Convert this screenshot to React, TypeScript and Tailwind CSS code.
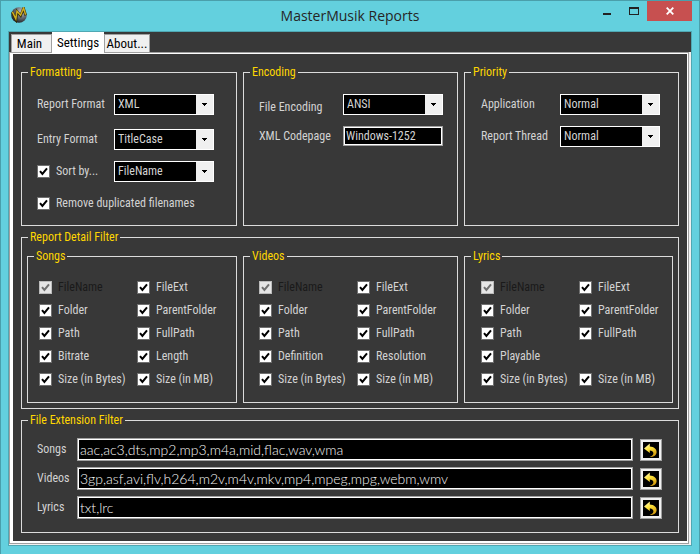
import { ReactNode, useState } from "react";

type Option = { label: string; disabled?: boolean } | null;

const songs: Option[] = [
	{ label: "FileName", disabled: true },
	{ label: "FileExt" },
	{ label: "Folder" },
	{ label: "ParentFolder" },
	{ label: "Path" },
	{ label: "FullPath" },
	{ label: "Bitrate" },
	{ label: "Length" },
	{ label: "Size (in Bytes)" },
	{ label: "Size (in MB)" },
];

const videos: Option[] = [
	{ label: "FileName", disabled: true },
	{ label: "FileExt" },
	{ label: "Folder" },
	{ label: "ParentFolder" },
	{ label: "Path" },
	{ label: "FullPath" },
	{ label: "Definition" },
	{ label: "Resolution" },
	{ label: "Size (in Bytes)" },
	{ label: "Size (in MB)" },
];

const lyrics: Option[] = [
	{ label: "FileName", disabled: true },
	{ label: "FileExt" },
	{ label: "Folder" },
	{ label: "ParentFolder" },
	{ label: "Path" },
	{ label: "FullPath" },
	{ label: "Playable" },
	null,
	{ label: "Size (in Bytes)" },
	{ label: "Size (in MB)" },
];

const extensions = [
	{ id: "ext-songs", label: "Songs", value: "aac,ac3,dts,mp2,mp3,m4a,mid,flac,wav,wma" },
	{ id: "ext-videos", label: "Videos", value: "3gp,asf,avi,flv,h264,m2v,m4v,mkv,mp4,mpeg,mpg,webm,wmv" },
	{ id: "ext-lyrics", label: "Lyrics", value: "txt,lrc" },
];

const Group = ({ title, className, children }: { title: string; className: string; children: ReactNode }) => (
	<fieldset className={`min-w-0 border border-[#dcdcdc] ${className}`}>
		<legend className="px-0.5 leading-[15px] text-[#ffd700]">{title}</legend>
		{children}
	</fieldset>
);

const Select = ({ id, value }: { id: string; value: string }) => (
	<div className="relative w-[100px] shrink-0 border border-white bg-black">
		<select id={id} className="block h-[19px] w-full appearance-none bg-black pr-5 pl-[3px] text-[#d3d3d3] outline-none">
			<option>{value}</option>
		</select>
		<span className="pointer-events-none absolute inset-y-0 right-0 flex w-[17px] items-center justify-center bg-[#f0f0f0]">
			<svg width="5" height="3" viewBox="0 0 5 3" shapeRendering="crispEdges">
				<path d="M0 0h5v1H4v1H3v1H2V2H1V1H0z" fill="#000" />
			</svg>
		</span>
	</div>
);

const Check = ({ label, disabled = false }: { label: string; disabled?: boolean }) => (
	<label className={`flex h-[13px] items-center gap-1.5 whitespace-nowrap ${disabled ? "text-[#1a1a1a]" : ""}`}>
		<span className="relative size-[13px] shrink-0">
			<input
				type="checkbox"
				defaultChecked
				disabled={disabled}
				className="peer block size-[13px] appearance-none border border-[#707070] bg-white disabled:border-[#bcbcbc] disabled:bg-[#e6e6e6]"
			/>
			<svg
				viewBox="0 0 13 13"
				className="pointer-events-none invisible absolute inset-0 text-black peer-checked:visible peer-disabled:text-[#707070]">
				<path d="M3 6.2 5.4 9 10 3.4" fill="none" stroke="currentColor" strokeWidth="2" />
			</svg>
		</span>
		{label}
	</label>
);

const CheckGrid = ({ options }: { options: Option[] }) => (
	<div className="grid grid-cols-[98px_1fr] gap-y-2.5">
		{options.map((option, i) => (option ? <Check key={i} {...option} /> : <span key={i} />))}
	</div>
);

const Logo = () => (
	<svg width="16" height="16" viewBox="0 0 16 16">
		<defs>
			<radialGradient id="ball" cx="0.65" cy="0.3" r="0.75">
				<stop offset="0" stopColor="#c4c8ce" />
				<stop offset="0.5" stopColor="#6a6f76" />
				<stop offset="1" stopColor="#1b1d20" />
			</radialGradient>
		</defs>
		<circle cx="8" cy="8" r="7.8" fill="url(#ball)" />
		<path d="M1.2 5.2 5 12.4 6 4.6 9.6 8.6 12.6 1.4 14.6 8.4" fill="none" stroke="#2e2806" strokeWidth="2.6" />
		<path d="M1.4 4.8 4.8 11.8 6 4.2 9.6 8.2 12.6 1 14.6 7.8" fill="none" stroke="#cfae20" strokeWidth="1.5" />
	</svg>
);

const UndoIcon = () => (
	<svg width="16" height="16" viewBox="0 0 16 16" className="bg-black">
		<defs>
			<linearGradient id="gold" x1="0" y1="0" x2="0.6" y2="1">
				<stop offset="0" stopColor="#fffbe0" />
				<stop offset="0.45" stopColor="#ffe640" />
				<stop offset="1" stopColor="#d8a010" />
			</linearGradient>
		</defs>
		<path d="M1 6.6 6.8 1.4V4.6C11 4.8 13.6 7 13.6 10C13.6 13 11 15 6.6 15C9.2 14.2 10.6 12.8 10.4 11C10.2 9.4 8.8 8.4 6.8 8.4V11Z" fill="url(#gold)" />
	</svg>
);

const ExtensionRow = ({ id, label, value }: { id: string; label: string; value: string }) => {
	const [text, setText] = useState(value);

	return (
		<div className="flex items-center">
			<label htmlFor={id} className="w-10 shrink-0">
				{label}
			</label>
			<input
				id={id}
				value={text}
				onChange={(e) => setText(e.target.value)}
				className="h-[23px] min-w-0 flex-1 border border-[#a0a0a0] bg-black px-0.5 font-['Lato','Liberation_Sans',sans-serif] text-[14px] font-light text-[#f5f5f5] shadow-[inset_0_0_0_1px_#fff] outline-none"
			/>
			<button
				type="button"
				aria-label={`Reset ${label}`}
				onClick={() => setText(value)}
				className="ml-[7px] flex size-[22px] shrink-0 items-center justify-center border border-[#a0a0a0] bg-[#f0f0f0]">
				<UndoIcon />
			</button>
		</div>
	);
};

const TitleBar = () => (
	<header className="grid h-[30px] grid-cols-[1fr_auto_1fr]">
		<div className="pt-1.5 pl-2.5">
			<Logo />
		</div>
		<h1 className="font-['Open_Sans',sans-serif] text-[14px] leading-[30px] text-[#262626]">MasterMusik Reports</h1>
		<div className="flex h-5 justify-end pr-[7px]">
			<button type="button" aria-label="Minimize" className="flex w-7 items-center justify-center">
				<svg width="8" height="8" viewBox="0 0 8 8">
					<path d="M0 6h8v2H0z" fill="#222" />
				</svg>
			</button>
			<button type="button" aria-label="Maximize" className="flex w-[26px] items-center justify-center">
				<svg width="10" height="8" viewBox="0 0 10 8" shapeRendering="crispEdges">
					<path d="M0 0h10v8H0zM1 2v5h8V2z" fill="#222" fillRule="evenodd" />
				</svg>
			</button>
			<button type="button" aria-label="Close" className="flex w-[45px] items-center justify-center bg-[#c75050]">
				<svg width="8" height="8" viewBox="0 0 8 8">
					<path d="M.7.7 7.3 7.3M7.3.7.7 7.3" stroke="#fff" strokeWidth="1.8" />
				</svg>
			</button>
		</div>
	</header>
);

const App = () => {
	return (
		<div className="flex min-h-screen flex-col border border-[#4a9fab] bg-[#63d0de] font-['Roboto_Condensed','Liberation_Sans',sans-serif] text-[12px] leading-[15px] text-[#d3d3d3]">
			<TitleBar />
			<main className="mx-[7px] mb-2 flex flex-1 flex-col border border-[#4fa8b3] bg-[#383838]">
				<nav className="flex h-5 items-end pl-0.5 text-[13px] text-black">
					<button type="button" className="h-[18px] w-[41px] border border-b-0 border-[#a0a0a0] bg-[#f0f0f0] pr-1">
						Main
					</button>
					<button type="button" className="relative -mb-px h-[21px] w-[52px] bg-white">
						Settings
					</button>
					<button type="button" className="h-[18px] w-[46px] border border-b-0 border-[#a0a0a0] bg-[#f0f0f0]">
						About...
					</button>
				</nav>

				<div className="flex flex-1 flex-col bg-[#f0f0f0] pr-0.5 pb-px">
					<div className="flex flex-1 flex-col border border-[#a0a0a0] bg-white pt-px pr-px pb-0.5 pl-[3px]">
						<form className="flex flex-1 flex-col gap-1 bg-[#383838] px-2 pt-[11px] pb-2">
							<div className="grid grid-cols-[216fr_215fr_215fr] gap-x-1.5">
								<Group title="Formatting" className="px-[15px] pt-3.5 pb-[15px] [&>legend]:-ml-[9px]">
									<div className="flex items-center">
										<label htmlFor="report-format" className="w-[77px]">Report Format</label>
										<Select id="report-format" value="XML" />
									</div>
									<div className="mt-3.5 flex items-center">
										<label htmlFor="entry-format" className="w-[77px]">Entry Format</label>
										<Select id="entry-format" value="TitleCase" />
									</div>
									<div className="mt-[11px] flex items-center">
										<div className="w-[77px]">
											<Check label="Sort by..." />
										</div>
										<Select id="sort-by" value="FileName" />
									</div>
									<div className="mt-[15px]">
										<Check label="Remove duplicated filenames" />
									</div>
								</Group>

								<Group title="Encoding" className="px-[15px] pt-3.5 pr-3.5 [&>legend]:-ml-[9px]">
									<div className="flex items-end">
										<label htmlFor="file-encoding" className="w-[84px]">File Encoding</label>
										<Select id="file-encoding" value="ANSI" />
									</div>
									<div className="mt-[11px] flex items-center">
										<label htmlFor="codepage" className="w-[84px]">XML Codepage</label>
										<input
											id="codepage"
											defaultValue="Windows-1252"
											className="h-5 w-[100px] border border-[#a0a0a0] bg-black px-0.5 shadow-[inset_0_0_0_1px_#fff] outline-none"
										/>
									</div>
								</Group>

								<Group title="Priority" className="pt-3.5 pl-4 [&>legend]:-ml-2.5">
									<div className="flex items-center">
										<label htmlFor="app-priority" className="w-[79px]">Application</label>
										<Select id="app-priority" value="Normal" />
									</div>
									<div className="mt-[11px] flex items-center">
										<label htmlFor="thread-priority" className="w-[79px]">Report Thread</label>
										<Select id="thread-priority" value="Normal" />
									</div>
								</Group>
							</div>

							<Group title="Report Detail Filter" className="px-[5px] pt-1 pb-[5px] [&>legend]:ml-px">
								<div className="grid grid-cols-[210fr_215fr_209fr] gap-x-1.5">
									<Group title="Songs" className="px-[11px] pt-[17px] pb-4 [&>legend]:-ml-[5px]">
										<CheckGrid options={songs} />
									</Group>
									<Group title="Videos" className="px-[15px] pt-[17px] pb-4 [&>legend]:-ml-[9px]">
										<CheckGrid options={videos} />
									</Group>
									<Group title="Lyrics" className="pt-[17px] pb-4 pl-4 [&>legend]:-ml-2.5">
										<CheckGrid options={lyrics} />
									</Group>
								</div>
							</Group>

							<Group title="File Extension Filter" className="pt-2.5 pr-4 pb-[13px] pl-[15px] [&>legend]:-ml-[9px]">
								<div className="flex flex-col gap-1.5">
									{extensions.map((ext) => (
										<ExtensionRow key={ext.id} {...ext} />
									))}
								</div>
							</Group>
						</form>
					</div>
				</div>
			</main>
		</div>
	);
};

export default App;
